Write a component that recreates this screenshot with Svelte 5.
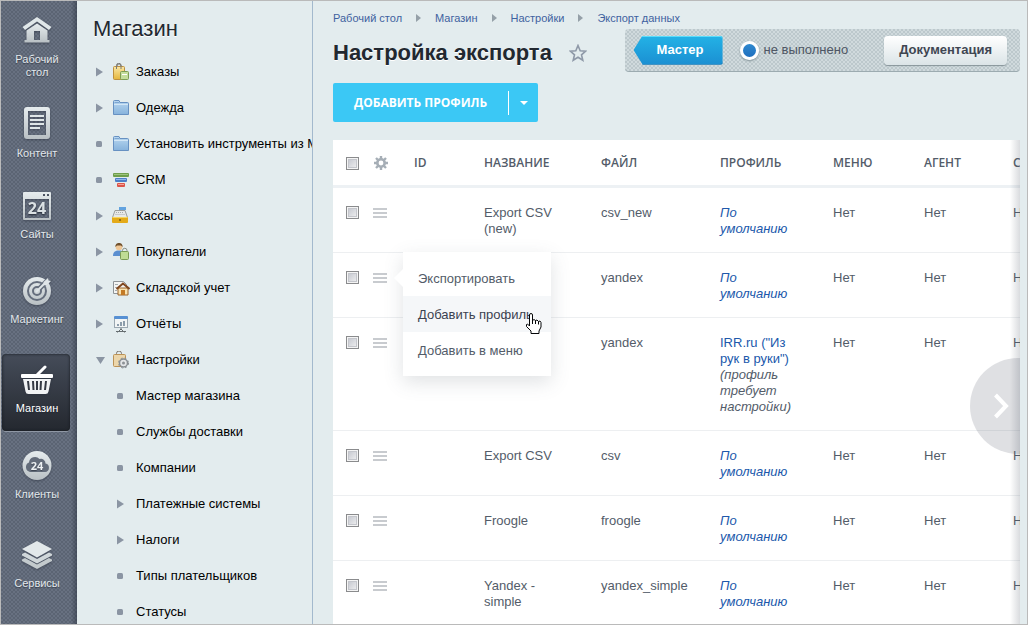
<script>
  const rail = [
    { id: 'home', label: 'Рабочий стол', space: 'none' },
    { id: 'content', label: 'Контент', space: 'none' },
    { id: 'sites', label: 'Сайты', space: 'small' },
    { id: 'marketing', label: 'Маркетинг', space: 'medium' },
    { id: 'shop', label: 'Магазин', space: 'large', active: true },
    { id: 'clients', label: 'Клиенты', space: 'medium' },
    { id: 'services', label: 'Сервисы', space: 'large' }
  ];

  const menu = [
    { label: 'Заказы', icon: 'orders', mark: 'right' },
    { label: 'Одежда', icon: 'folder', mark: 'right' },
    { label: 'Установить инструменты из Маркетплейс', icon: 'folder', mark: 'dot' },
    { label: 'CRM', icon: 'crm', mark: 'dot' },
    { label: 'Кассы', icon: 'cash', mark: 'right' },
    { label: 'Покупатели', icon: 'buyers', mark: 'right' },
    { label: 'Складской учет', icon: 'stock', mark: 'right' },
    { label: 'Отчёты', icon: 'reports', mark: 'right' },
    { label: 'Настройки', icon: 'settings', mark: 'down' },
    { label: 'Мастер магазина', mark: 'dot' },
    { label: 'Службы доставки', mark: 'dot' },
    { label: 'Компании', mark: 'dot' },
    { label: 'Платежные системы', mark: 'right' },
    { label: 'Налоги', mark: 'right' },
    { label: 'Типы плательщиков', mark: 'dot' },
    { label: 'Статусы', mark: 'dot' }
  ];

  const crumbs = ['Рабочий стол', 'Магазин', 'Настройки', 'Экспорт данных'];

  const rows = [
    { name: 'Export CSV (new)', file: 'csv_new' },
    { name: '', file: 'yandex', popup: true },
    { name: '', file: 'yandex', profile: 'IRR.ru ("Из рук в руки")', note: '(профиль требует настройки)' },
    { name: 'Export CSV', file: 'csv' },
    { name: 'Froogle', file: 'froogle' },
    { name: 'Yandex - simple', file: 'yandex_simple' }
  ];

  const actions = ['Экспортировать', 'Добавить профиль', 'Добавить в меню'];
</script>

<div class="shell">
  <nav class="rail" aria-label="Разделы">
    {#each rail as item}
      <a href="#{item.id}" class="rail-item {item.space}" class:active={item.active}>
        {#if item.id === 'home'}
          <svg width="30" height="28" viewBox="0 0 30 28">
            <path d="M15 0 0.500 10l2.500 3L15 4.500 27 13l2.500-3z" fill="#e0e7e9" />
            <path fill-rule="evenodd" d="M15 6.500 4.500 13.500V23H2.500v2.500h25V23h-2V13.500zM12 14h6v9h-6z" fill="url(#metal)" />
          </svg>
        {:else if item.id === 'content'}
          <svg width="26" height="32" viewBox="0 0 26 32">
            <path fill-rule="evenodd" d="M3 0h20a3 3 0 0 1 3 3v26a3 3 0 0 1-3 3H3a3 3 0 0 1-3-3V3a3 3 0 0 1 3-3zM4 4v24h18V4z" fill="url(#metal)" />
            <path d="M6 9h14M6 13h14M6 17h14M6 21h10" stroke="#dfe6e8" stroke-width="2" />
          </svg>
        {:else if item.id === 'sites'}
          <svg width="28" height="28" viewBox="0 0 28 28">
            <path fill-rule="evenodd" d="M1 0h26a1 1 0 0 1 1 1v26a1 1 0 0 1-1 1H1a1 1 0 0 1-1-1V1a1 1 0 0 1 1-1zM2 7v19h24V7zM20 2v2h2V2zM24 2v2h2V2z" fill="url(#metal)" />
            <text x="14" y="22" text-anchor="middle" class="num">24</text>
          </svg>
        {:else if item.id === 'marketing'}
          <svg width="30" height="28" viewBox="0 0 30 28">
            <circle cx="15" cy="14" r="14" fill="url(#metal)" />
            <circle cx="15" cy="14" r="9" fill="none" stroke="#656e7d" stroke-width="2" />
            <circle cx="15" cy="14" r="4" fill="none" stroke="#656e7d" stroke-width="2" />
            <path d="M17 12 28 1" stroke="#656e7d" stroke-width="5" />
            <path d="M14 15 25 4" stroke="#dfe5e8" stroke-width="2" />
            <path d="M21.500 5 26 1 26.500 3.500 29 4 24.500 8.500 21.500 8z" fill="#dfe5e8" />
          </svg>
        {:else if item.id === 'shop'}
          <svg width="32" height="28" viewBox="0 0 32 28">
            <path d="M16.500 8.500 24 1" stroke="#fff" stroke-width="3" stroke-linecap="round" />
            <rect x="0" y="8" width="32" height="4" rx="1" fill="#fff" />
            <path d="M2 13h28l-2.500 12.500a3 3 0 0 1-3 2.500H7.500a3 3 0 0 1-3-2.500z" fill="#f1f3f4" />
            <path d="M7 15l1 9M12 15l.5 9M16 15v9M20 15l-.5 9M25 15l-1 9" stroke="#343943" stroke-width="2" />
          </svg>
        {:else if item.id === 'clients'}
          <svg width="30" height="29" viewBox="0 0 30 29">
            <circle cx="15" cy="14.500" r="14.500" fill="url(#metal)" />
            <path d="M8 21a5 5 0 0 1-1-9.500 6 6 0 0 1 10.500-3.500 4.500 4.500 0 0 1 6 4.500A4.300 4.300 0 0 1 23 21z" fill="#636c7a" />
            <text x="15" y="18.500" text-anchor="middle" class="num small-num">24</text>
          </svg>
        {:else}
          <svg width="32" height="28" viewBox="0 0 32 28">
            <path d="M16 28 1 20v-1.500l3-1.500 12 6.500 12-6.500 3 1.500V20z" fill="#c3cacd" />
            <path d="M16 22.500 1 14.500V13l3-1.500L16 18l12-6.500 3 1.500v1.500z" fill="#d0d7da" />
            <path d="M16 0 1 8l15 8.500L31 8z" fill="#e2e8ea" />
          </svg>
        {/if}
        <span>{item.label}</span>
      </a>
    {/each}
  </nav>

  <svg class="defs" width="0" height="0" aria-hidden="true">
    <defs>
      <linearGradient id="metal" x1="0" y1="0" x2="0" y2="1">
        <stop offset="0" stop-color="#e6ecee" /><stop offset="1" stop-color="#b9c0c4" />
      </linearGradient>
      <linearGradient id="blue" x1="0" y1="0" x2="0" y2="1">
        <stop offset="0" stop-color="#b9d8f0" /><stop offset="1" stop-color="#86b2dc" />
      </linearGradient>
      <linearGradient id="gold" x1="0" y1="0" x2="0" y2="1">
        <stop offset="0" stop-color="#fae7a4" /><stop offset="1" stop-color="#e5b63c" />
      </linearGradient>
    </defs>
  </svg>

  <aside class="side">
    <h2>Магазин</h2>
    <ul>
      {#each menu as item}
        <li class:sub={!item.icon}>
          <a href="#menu">
            <span class="mark">
              <svg width="9" height="10" viewBox="0 0 9 10" fill="#8b95a3">
                {#if item.mark === 'right'}
                  <path d="M0 0.500 7 5 0 9.500z" />
                {:else if item.mark === 'down'}
                  <path d="M0 2h9L4.500 9z" />
                {:else}
                  <rect x="0" y="2" width="6" height="6" rx="1.500" />
                {/if}
              </svg>
            </span>
            {#if item.icon}
              <svg class="pic" width="18" height="18" viewBox="0 0 18 18">
                {#if item.icon === 'orders'}
                  <path d="M5 5V3a2 2 0 0 1 4 0v3" fill="none" stroke="#7c7c78" stroke-width="1.200" />
                  <rect x="1.500" y="3.500" width="11" height="13" rx="1" fill="url(#gold)" stroke="#bd9040" />
                  <path d="M4.500 6V2.500a2 2 0 0 1 4.500 0V6" fill="none" stroke="#7c7c78" />
                  <rect x="8.500" y="8.500" width="8" height="8" rx="1" fill="#c5de9c" stroke="#7d9d54" />
                  <path d="M10 11.500h5" stroke="#fff" />
                {:else if item.icon === 'folder'}
                  <path d="M1.500 15.500V2.500a1 1 0 0 1 1-1h4.500l1 2h7.500a1 1 0 0 1 1 1v11z" fill="url(#blue)" stroke="#6791c2" />
                  <path d="M2 5.500h14" stroke="#d2e6f6" />
                  <path d="M2.500 3.500h5" stroke="#7ea6d2" />
                {:else if item.icon === 'crm'}
                  <rect x="1" y="2" width="16" height="4" rx="1" fill="#6f9f4c" />
                  <path d="M2 3.500h14" stroke="#9fc47f" />
                  <rect x="3" y="7" width="12" height="4" rx="1" fill="#4b7fc9" />
                  <path d="M4 8.500h10" stroke="#91b6ea" />
                  <rect x="5" y="12" width="8" height="4" rx="1" fill="#dc5449" />
                  <path d="M6 13.500h6" stroke="#f4a49c" />
                {:else if item.icon === 'cash'}
                  <rect x="7" y="0" width="7" height="3" fill="#63a3df" />
                  <path d="M3 3.500h10l2.500 7h-15z" fill="#e8e9e8" stroke="#9b9d9b" />
                  <path d="M4 5.500h8M3.500 7.500h9" stroke="#a9adae" stroke-dasharray="1 1" />
                  <rect x="0" y="10" width="16" height="6" rx="1" fill="#e4aa18" />
                  <path d="M0.500 10.500h15" stroke="#f7d65e" />
                  <circle cx="8" cy="13" r="1" fill="#7d5b12" />
                {:else if item.icon === 'buyers'}
                  <path d="M1 13c0-4 2-5.500 6-5.500s5 1.500 5 5.500z" fill="#5b8fd0" />
                  <circle cx="7" cy="4" r="3.300" fill="#efc796" />
                  <path d="M3.500 4C3 1.500 5 0 7 0s4 1.500 3.500 4L9 2.500H5z" fill="#70502c" />
                  <path d="M10.500 9V7.500a2 2 0 0 1 4.500 0V9" fill="none" stroke="#8a9288" />
                  <rect x="8.500" y="8.500" width="8" height="8" rx="1" fill="#bfdc95" stroke="#7a9b55" />
                {:else if item.icon === 'stock'}
                  <path d="M1.500 2.500h10l3 3v9h-13z" fill="#f4f5f3" stroke="#8f9497" />
                  <path d="M3 5.500h3M3 8.500h2M3 11.500h2" stroke="#a7adb0" />
                  <path d="M6 9h10v7H6z" fill="#f9e3b0" stroke="#9a632a" />
                  <path d="M4.500 10 11 4.500 17.500 10" fill="none" stroke="#80471e" stroke-width="2" />
                  <rect x="9" y="11" width="4" height="5" fill="#c37a25" />
                {:else if item.icon === 'reports'}
                  <path d="M9 13v2M5.500 17.500 9 14l3.500 3.500M4 16.500h10" fill="none" stroke="#666d70" />
                  <rect x="2.500" y="3.500" width="13" height="9" fill="#f2f5f5" stroke="#9aa7b0" />
                  <rect x="2" y="1" width="14" height="3" rx="1" fill="#5790d3" />
                  <path d="M6 11V9M9 11V7M12 11V6" stroke="#8c9dab" stroke-width="2" />
                {:else}
                  <path d="M4.500 5V2.500a2.300 2.300 0 0 1 5 0V5" fill="none" stroke="#7d746a" />
                  <rect x="1.500" y="3.500" width="12" height="12" rx="1" fill="#ecd6aa" stroke="#bb9256" />
                  <circle cx="11.500" cy="12" r="4" fill="#e4e6e8" stroke="#878d92" stroke-width="1.500" />
                  <circle cx="11.500" cy="12" r="5" fill="none" stroke="#878d92" stroke-dasharray="2 2" />
                  <circle cx="11.500" cy="12" r="1.500" fill="#8d9296" />
                {/if}
              </svg>
            {/if}
            <span>{item.label}</span>
          </a>
        </li>
      {/each}
    </ul>
  </aside>

  <main>
    <header>
      <div class="heading">
        <nav class="crumbs" aria-label="Путь">
          {#each crumbs as crumb, i}
            {#if i > 0}
              <svg width="5" height="8" viewBox="0 0 5 8"><path d="M0 0 5 4 0 8z" fill="#95a0a8" /></svg>
            {/if}
            <a href="#crumb">{crumb}</a>
          {/each}
        </nav>
        <div class="title">
          <h1>Настройка экспорта</h1>
          <button class="star" aria-label="В избранное">
            <svg width="18" height="18" viewBox="0 0 18 18"><path d="M9 1.500 11.200 6.700 16.600 7.200 12.500 10.800 13.800 16.200 9 13.300 4.200 16.200 5.500 10.800 1.400 7.200 6.800 6.700z" fill="none" stroke="#8f99a8" stroke-width="1.600" /></svg>
          </button>
        </div>
      </div>
      <div class="panel">
        <button class="master">Мастер</button>
        <label class="status"><input type="radio" checked />не выполнено</label>
        <button class="docs">Документация</button>
      </div>
    </header>

    <div class="add">
      <button class="add-main">ДОБАВИТЬ ПРОФИЛЬ</button>
      <button class="add-more" aria-label="Ещё">
        <svg width="8" height="4" viewBox="0 0 8 4"><path d="M0 0h8L4 4z" fill="#fff" /></svg>
      </button>
    </div>

    <section class="grid">
      <table>
        <colgroup>
          <col class="c-check" /><col class="c-act" /><col class="c-id" /><col class="c-name" /><col class="c-file" />
          <col class="c-profile" /><col class="c-menu" /><col class="c-agent" /><col class="c-last" />
        </colgroup>
        <thead>
          <tr>
            <th><input type="checkbox" aria-label="Выбрать все" /></th>
            <th>
              <button class="gear" aria-label="Настроить">
                <svg width="14" height="14" viewBox="0 0 14 14">
                  <circle cx="7" cy="7" r="3.700" fill="none" stroke="#a6aeb6" stroke-width="2.600" />
                  <path d="M7 0v3M7 11v3M0 7h3M11 7h3M2 2l2 2M10 10l2 2M12 2l-2 2M4 10l-2 2" stroke="#a6aeb6" stroke-width="2.400" />
                </svg>
              </button>
            </th>
            <th>ID</th>
            <th>НАЗВАНИЕ</th>
            <th>ФАЙЛ</th>
            <th>ПРОФИЛЬ</th>
            <th>МЕНЮ</th>
            <th>АГЕНТ</th>
            <th>СОЗДАН</th>
          </tr>
        </thead>
        <tbody>
          {#each rows as row}
            <tr>
              <td><input type="checkbox" aria-label="Выбрать строку" /></td>
              <td class="act">
                <button class="burger" aria-label="Действия">
                  <svg width="14" height="10" viewBox="0 0 14 10"><path d="M0 1h14M0 5h14M0 9h14" stroke="#c8cbcf" stroke-width="2" /></svg>
                </button>
                {#if row.popup}
                  <div class="popup">
                    {#each actions as action, i}
                      <button class:hover={i === 1}>{action}</button>
                    {/each}
                    <svg class="pointer" width="17" height="22" viewBox="0 0 17 22">
                      <path d="M4.500 13V2a1.500 1.500 0 0 1 3 0v5.500L9 6.500l1.500 1 1.500-.500 1.500 1.500 1.500-.500 1 1.500v4.500l-2 4v2.500h-8V18L1.500 13.500v-2l1-.500z" fill="#fff" stroke="#050608" stroke-linejoin="round" />
                      <path d="M7.500 7v4M10.500 7.500v3.500M13.500 8.500v3" stroke="#050608" />
                    </svg>
                  </div>
                {/if}
              </td>
              <td></td>
              <td>{row.name}</td>
              <td>{row.file}</td>
              <td>
                {#if row.profile}
                  <a href="#profile">{row.profile}</a> <i>{row.note}</i>
                {:else}
                  <a href="#profile"><i>По умолчанию</i></a>
                {/if}
              </td>
              <td>Нет</td>
              <td>Нет</td>
              <td>Нет</td>
            </tr>
          {/each}
        </tbody>
      </table>
      <div class="fade"></div>
      <button class="next" aria-label="Прокрутить вправо">
        <svg width="16" height="28" viewBox="0 0 16 28"><path d="M2.500 3 13 14 2.500 25" fill="none" stroke="#fff" stroke-width="4" /></svg>
      </button>
    </section>
  </main>
</div>

<style>
  :global(body) { margin: 0; }
  .shell, .shell * { box-sizing: border-box; }
  .shell {
    display: grid;
    grid-template-columns: 76px 236px minmax(0, 1fr);
    height: 100vh;
    overflow: hidden;
    border: 1px solid #bababa;
    background: #e3ecee;
    font-family: "Liberation Sans", Arial, sans-serif;
    font-size: 13px;
    line-height: 16px;
    color: #535c69;
  }
  .defs { position: absolute; }
  button { padding: 0; border: 0; background: none; font: inherit; color: inherit; cursor: pointer; }
  a { color: #2058ab; text-decoration: none; }
  svg { display: block; flex: none; }

  .rail {
    display: flex;
    flex-direction: column;
    padding-top: 4px;
    overflow: hidden;
    background:
      linear-gradient(to left, rgba(40, 48, 62, 0.5), transparent 6px),
      radial-gradient(circle at 1px 1px, #5b6473 1px, transparent 1px) 0 0 / 4px 4px,
      radial-gradient(circle at 3px 3px, #5b6473 1px, transparent 1px) 0 0 / 4px 4px,
      #687181;
  }
  .rail-item {
    display: flex;
    flex-direction: column;
    align-items: center;
    flex: none;
    gap: 8px;
    margin-right: 7px;
    padding: 12px 7px 16px 9px;
    border-radius: 4px;
    font-size: 11px;
    line-height: 13px;
    text-align: center;
    color: #e3e8ec;
    text-shadow: 0 1px 1px rgba(30, 36, 48, 0.6);
  }
  .rail-item span { min-width: 53px; display: flex; justify-content: center; }
  .small { margin-top: 4px; }
  .medium { margin-top: 8px; }
  .large { margin-top: 12px; }
  .rail-item svg { filter: drop-shadow(0 1px 1px rgba(35, 42, 55, 0.5)); overflow: visible; }
  .rail-item { margin-left: 1px; }
  .active { background: linear-gradient(#454c59, #24282f); box-shadow: inset 0 0 3px #15181d, 0 1px 0 #8f97a4; color: #fff; }
  .num { font-family: "Open Sans", sans-serif; font-size: 16px; font-weight: 700; fill: #dbe1e4; }
  .small-num { font-size: 11px; fill: #eef2f4; }

  .side { overflow: hidden; border-right: 1px solid #a3b9cd; }
  h2 { margin: 0; padding: 15px 16px 12px; font-size: 22px; line-height: 26px; font-weight: 400; color: #222830; text-shadow: 0 1px 0 #fff; }
  .side ul { margin: 0; padding: 0; list-style: none; }
  .side a { display: flex; align-items: center; height: 36px; padding-left: 19px; color: #000; white-space: nowrap; }
  .mark { width: 16px; flex: none; }
  .pic { margin-right: 6px; }
  .sub a { padding-left: 40px; }
  .sub .mark { width: 19px; }

  main { display: flex; flex-direction: column; min-width: 0; overflow: hidden; padding: 0 7px 0 20px; }
  header { display: flex; justify-content: space-between; align-items: flex-start; }
  .crumbs { display: flex; align-items: center; gap: 14px; padding-top: 9px; font-size: 11px; white-space: nowrap; }
  .crumbs a { color: #3f62a0; }
  .title { display: flex; align-items: center; gap: 17px; padding-top: 12px; }
  h1 { margin: 0; font-size: 22px; line-height: 30px; color: #222830; text-shadow: 0 1px 0 #fff; white-space: nowrap; }
  .panel {
    display: flex;
    align-items: center;
    flex: none;
    height: 43px;
    margin-top: 28px;
    margin-left: -60px;
    padding: 0 13px 0 9px;
    border-radius: 4px;
    border-bottom: 1px solid #9cabb0;
    background:
      radial-gradient(circle at 1px 1px, #bcc8cc 1px, transparent 1px) 0 0 / 4px 4px,
      radial-gradient(circle at 3px 3px, #bcc8cc 1px, transparent 1px) 0 0 / 4px 4px,
      #d0dadd;
  }
  .master {
    height: 29px;
    padding: 0 19px 0 23px;
    border-radius: 3px;
    font-weight: 700;
    color: #fff;
    background: linear-gradient(#23b2e6, #1b8fd2);
    box-shadow: inset 0 1px 0 #5bdcfa, inset 0 -1px 0 #1377b4;
    clip-path: polygon(0 50%, 9px 0, 100% 0, 100% 100%, 9px 100%);
  }
  .status { display: flex; align-items: center; gap: 5px; margin-left: 17px; color: #4e5664; white-space: nowrap; }
  .status input {
    appearance: none;
    width: 19px;
    height: 19px;
    margin: 0;
    border: 3px solid #fff;
    border-radius: 50%;
    background: linear-gradient(#2f89cf, #1f6fbe);
    box-shadow: 0 1px 2px #7f8f95;
  }
  .docs {
    height: 29px;
    margin-left: 36px;
    padding: 0 15px;
    border-radius: 4px;
    font-weight: 700;
    color: #3f4652;
    background: linear-gradient(#fff, #dbe4e7);
    box-shadow: 0 1px 1px #87949a;
  }

  .add { display: flex; align-items: center; align-self: flex-start; flex: none; height: 39px; margin-top: 11px; border-radius: 2px; background: #3bc8f5; color: #fff; }
  .add-main { padding: 0 21px; height: 24px; border-right: 1px solid #fff; font-family: "Open Sans", sans-serif; font-size: 12px; font-weight: 700; line-height: 24px; }
  .add-more { display: flex; align-items: center; justify-content: center; width: 29px; height: 39px; }

  .grid { position: relative; overflow: hidden; flex: 1; margin-top: 18px; background: #fff; }
  table { width: 760px; table-layout: fixed; border-collapse: separate; border-spacing: 0; }
  .c-check { width: 28px; }
  .c-act { width: 40px; }
  .c-id { width: 70px; }
  .c-name { width: 117px; }
  .c-file { width: 119px; }
  .c-profile { width: 113px; }
  .c-menu { width: 91px; }
  .c-agent { width: 89px; }
  th { height: 48px; padding: 1px 0 0 13px; border-bottom: 3px solid #edf1f4; font-family: "Open Sans", sans-serif; font-size: 12px; font-weight: 600; text-align: left; color: #535c69; }
  td { padding: 17px 24px 15px 13px; border-bottom: 1px solid #edeff1; vertical-align: top; }
  th:nth-child(-n + 2), td:nth-child(-n + 2) { padding-right: 0; }
  input[type='checkbox'] {
    appearance: none;
    display: block;
    width: 13px;
    height: 13px;
    margin: 1px 0;
    border: 1px solid #8a8b8d;
    background: linear-gradient(135deg, #bfc2cb, #f4f4f4);
    box-shadow: inset 0 0 0 1px #f4f4f4, inset 0 0 0 2px #c4c6cc;
  }
  .gear { display: block; }
  .burger { display: block; padding: 3px 0 2px; }
  .act { position: relative; padding-left: 12px; }

  .popup { position: absolute; z-index: 2; top: -1px; left: 42px; width: 148px; padding: 8px 0; background: #fff; box-shadow: 0 6px 18px rgba(83, 92, 105, 0.18); }
  .popup::before { content: ''; position: absolute; top: 17px; left: -9px; width: 9px; height: 18px; background: #fff; clip-path: polygon(100% 0, 100% 100%, 0 50%); }
  .popup button { display: block; width: 100%; height: 36px; padding: 1px 15px 0; text-align: left; white-space: nowrap; }
  .popup .hover { background: #f5f7f9; color: #3b4250; }
  .pointer { position: absolute; top: 61px; left: 122px; }

  .fade { position: absolute; top: 0; right: 0; bottom: 0; width: 10px; background: linear-gradient(to left, rgba(83, 92, 105, 0.22), transparent); pointer-events: none; }
  .next { position: absolute; top: 218px; right: -46px; width: 96px; height: 96px; padding-left: 23px; border-radius: 50%; background: rgba(83, 92, 105, 0.19); }
</style>
